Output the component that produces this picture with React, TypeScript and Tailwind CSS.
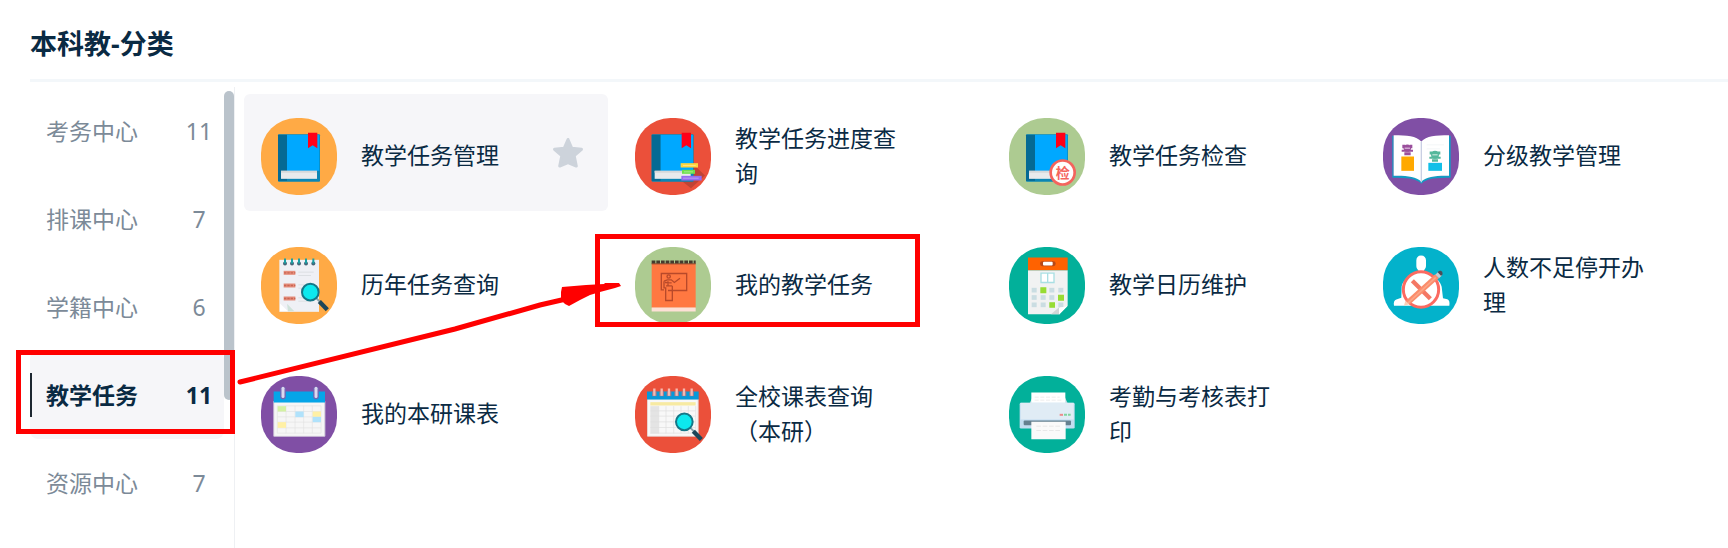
import { useState } from "react";
import type { ReactNode } from "react";
import clsx from "clsx";

const categories = [
  { name: "考务中心", count: 11 },
  { name: "排课中心", count: 7 },
  { name: "学籍中心", count: 6 },
  { name: "教学任务", count: 11 },
  { name: "资源中心", count: 7 },
];

// Round badge, flattened a little on all four sides
function Badge({ cx, cy, color, children }: { cx: number; cy: number; color: string; children: ReactNode }) {
  return (
    <svg
      className="w-[76px] h-[77px] shrink-0"
      viewBox={`${cx - 114} ${cy - 115.5} 228 231`}
      aria-hidden="true"
    >
      <rect x={cx - 114} y={cy - 115.5} width="228" height="231" rx="106" fill={color} />
      {children}
    </svg>
  );
}

function Book({ x = 0 }: { x?: number }) {
  return (
    <g transform={`translate(${x} 0)`}>
      <rect x="84" y="86" width="126" height="143" rx="3" fill="#0b86b4" />
      <rect x="84" y="88" width="27" height="138" fill="#056a94" />
      <rect x="111" y="88" width="97" height="108" fill="#00a8ff" />
      <rect x="93" y="196" width="108" height="24" fill="#e8eaec" />
      <path d="M93 196h108v6H93z" fill="#d5d8da" />
      <path d="M174 82h28v46l-14-9-14 9z" fill="#ff0018" />
    </g>
  );
}

function Lens() {
  return (
    <>
      <path d="M200 190l10 10" stroke="#8aa5ad" strokeWidth="6" />
      <path d="M208 199l24 25" stroke="#1d4659" strokeWidth="13" />
      <circle cx="181" cy="171" r="25" fill="#0ce9ee" stroke="#157787" strokeWidth="6" />
    </>
  );
}

function NotebookIcon() {
  return (
    <Badge cx={147} cy={151} color="#ffaa45">
      <rect x="88" y="74" width="119" height="156" fill="#eff0f5" />
      {[105, 126, 147, 168, 190].map((x) => (
        <g key={x}>
          <circle cx={x} cy="85" r="6" fill="#456477" />
          <path d={`M${x} 70v15`} stroke="#19a0a5" strokeWidth="6" />
        </g>
      ))}
      {[113, 151, 190].map((y) => (
        <g key={y}>
          <path d={`M101 ${y}h35`} stroke="#e58d7b" strokeWidth="12" />
          <path d={`M102 ${y}h34`} stroke="#c96552" strokeWidth="4" strokeDasharray="7 3" />
          <path d={`M145 ${y - 2}h46M145 ${y + 8}h38`} stroke="#dcdfe3" strokeWidth="3" />
        </g>
      ))}
      <path d="M90 205l24 23H90z" fill="#fff" />
      <path d="M111 206l22 22h-19z" fill="#cfe2da" />
      <Lens />
    </Badge>
  );
}

function BooksIcon() {
  return (
    <Badge cx={147} cy={153} color="#eb503a">
      <path d="M208 176l35 34-42 38-38-30z" fill="#c04434" />
      <Book x={-1} />
      <path d="M170 173h52v13h-52z" fill="#ffd640" />
      <path d="M174 193h39v12h-39z" fill="#6fe04e" />
      <path d="M172 211h61v14h-61z" fill="#966bf0" />
      <path d="M177 180h38M180 199h27M177 218h47" stroke="#fff" strokeOpacity="0.35" strokeWidth="3" />
    </Badge>
  );
}

function InspectIcon() {
  return (
    <Badge cx={141} cy={153} color="#adcb91">
      <Book x={-6} />
      <circle cx="188" cy="201" r="36" fill="#fff" stroke="#f4645d" strokeWidth="8" />
      <text
        x="188"
        y="216"
        textAnchor="middle"
        fontSize="42"
        fontWeight="700"
        fill="#f4645d"
        fontFamily="'Noto Sans CJK SC', sans-serif"
      >
        检
      </text>
    </Badge>
  );
}

function OpenBookIcon() {
  return (
    <Badge cx={148} cy={153} color="#804fa5">
      <path d="M62 91h4v119c40-1 66 2 83 14 17-12 43-15 83-14V91h5v126c-40 0-72 1-88 18-16-17-48-18-87-18z" fill="#129cc4" />
      <path d="M66 89c40 0 68 2 83 19v120c-17-14-43-18-83-17z" fill="#fff" />
      <path d="M232 89c-40 0-68 2-83 19v120c17-14 43-18 83-17z" fill="#fff" />
      <path d="M149 108v122" stroke="#c9cfe3" strokeWidth="4" />
      <path d="M165 118h52M165 130h40" stroke="#edf1f4" strokeWidth="2" />
      <g fill="#9a4f9c">
        <circle cx="107" cy="128" r="11" />
        <path d="M92 118h8v10h-8zM114 118h8v10h-8zM90 133h34v6H90zM98 140h19v9H98z" />
      </g>
      <path d="M99 128h16" stroke="#ead4eb" strokeWidth="3" />
      <rect x="89" y="153" width="38" height="43" fill="#ffa900" />
      <g fill="#55b89c">
        <circle cx="190" cy="148" r="12" />
        <path d="M174 138h8v9h-8zM198 138h8v9h-8zM173 154h34v6h-34zM181 161h18v8h-18z" />
      </g>
      <path d="M182 148h16" stroke="#d5efe7" strokeWidth="3" />
      <rect x="170" y="172" width="41" height="24" fill="#12bfe8" />
    </Badge>
  );
}

function BoardIcon() {
  return (
    <Badge cx={141} cy={151} color="#adcb91">
      <rect x="77" y="86" width="132" height="132" fill="#ff7841" />
      <path d="M77 81h132" stroke="#453b2e" strokeWidth="10" strokeDasharray="11 3" />
      <path d="M77 86h132" stroke="#8c452c" strokeWidth="3" />
      <rect x="77" y="217" width="132" height="12" fill="#fde0d6" />
      <g fill="none" stroke="#b8492a" strokeWidth="4">
        <path d="M126 166h56v-51h-76v49h8" />
        <circle cx="128" cy="124" r="5" />
        <path d="M114 138l10-4h12l9 8 17-13M114 138v20h5v38h20v-44M117 142l20 1M126 138v15M120 152h18" />
      </g>
    </Badge>
  );
}

function CalendarIcon() {
  return (
    <Badge cx={141} cy={151} color="#02b09a">
      <path d="M84 105h119v109l-24 23H84z" fill="#f1f2f2" />
      <rect x="84" y="67" width="119" height="38" fill="#ff6200" />
      <rect x="120" y="78" width="47" height="15" rx="7" fill="#b64818" />
      <rect x="129" y="80" width="29" height="11" rx="3" fill="#fff" />
      <path d="M123 114h39v28h-39zM143 114v28" fill="#fff" stroke="#a9dfe3" strokeWidth="4" />
      {[165, 187, 209].map((y) =>
        [103, 130, 156, 183].map((x) => <rect key={`${x}-${y}`} x={x - 8} y={y - 7} width="15" height="14" fill="#cadde2" />)
      )}
      <path d="M121 156h18v18h-18zM174 179h18v18h-18zM148 201h17v17h-17z" fill="#97dc32" />
      <path d="M153 237l26-22 2 22z" fill="#d2d6d6" />
      <path d="M203 213l-26 25v-20z" fill="#fff" />
      <path d="M204 212l-26 27h26z" fill="#02b09a" />
    </Badge>
  );
}

function SuspendIcon() {
  return (
    <Badge cx={148} cy={151} color="#03b2cb">
      <path
        d="M148 61c10 0 15 6 15 15v16c0 6-3 10-6 13v8l26 12c15 7 23 16 27 30l4 34 13 3c5 2 8 8 6 20H67c-2-11 1-17 7-19l15-5 1-35c4-13 11-21 27-28l23-12v-8c-4-3-6-7-6-13V76c0-9 5-15 14-15z"
        fill="#fff"
      />
      <circle cx="148" cy="163" r="53" fill="#fff" stroke="#fb6a61" strokeWidth="9" />
      <path d="M122 137l54 54" stroke="#f47764" strokeWidth="13" />
      <path d="M108 203l88-80" stroke="#fb8c6b" strokeWidth="16" />
      <path d="M106 206l86-79" stroke="#fba688" strokeWidth="5" />
      <path d="M97 212l4-15 12 10z" fill="#fbd0b7" />
      <path d="M191 119l9-9 11 11-9 8z" fill="#c6cbd0" />
      <path d="M198 111c4-6 12-6 14 0s0 9-4 11z" fill="#4c4d58" />
    </Badge>
  );
}

function TimetableIcon() {
  return (
    <Badge cx={147} cy={149} color="#804fa5">
      <rect x="70" y="108" width="156" height="108" rx="3" fill="#d9d4e0" />
      <rect x="73" y="112" width="149" height="101" fill="#f6f6f6" />
      <rect x="71" y="80" width="154" height="33" fill="#05a5e8" />
      <g fill="none" stroke="#e2e2e2" strokeWidth="2">
        <path d="M82 123h131v82H82zM82 140h131M82 156h131M82 172h131M82 189h131M108 123v82M135 123v82M161 123v82M187 123v82" />
      </g>
      <rect x="83" y="124" width="25" height="16" fill="#d3f1a4" />
      <rect x="83" y="172" width="25" height="17" fill="#fff0a5" />
      <rect x="136" y="140" width="25" height="17" fill="#b0e2fb" />
      <rect x="188" y="140" width="25" height="16" fill="#fff0a5" />
      <rect x="188" y="156" width="25" height="16" fill="#b0e2fb" />
      {[99, 198].map((x) => (
        <g key={x} strokeLinecap="round">
          <path d={`M${x} 74v21`} stroke="#7067b5" strokeWidth="17" />
          <path d={`M${x} 70v25`} stroke="#dcd9ef" strokeWidth="9" />
        </g>
      ))}
    </Badge>
  );
}

function SearchTableIcon() {
  return (
    <Badge cx={147} cy={149} color="#eb503a">
      <rect x="69" y="102" width="155" height="114" rx="3" fill="#e8d2cf" />
      <rect x="72" y="104" width="149" height="109" fill="#f8f8f8" />
      <rect x="69" y="80" width="155" height="24" fill="#0799d9" />
      {[91, 113, 135, 158, 180, 203].map((x) => (
        <g key={x}>
          <path d={`M${x} 80v14`} stroke="#9a7a91" strokeWidth="14" />
          <path d={`M${x} 71v22`} stroke="#f6b9b0" strokeWidth="7" />
        </g>
      ))}
      <rect x="79" y="112" width="136" height="10" fill="#f7eaa2" />
      <rect x="79" y="124" width="25" height="82" fill="#e4e4e4" />
      <path
        d="M79 138h136M79 154h136M79 171h136M79 188h136M79 205h136M104 124v82M126 124v82M149 124v82M171 124v82M193 124v82M215 124v82"
        stroke="#dedede"
        strokeWidth="2"
      />
      <Lens />
    </Badge>
  );
}

function PrinterIcon() {
  return (
    <Badge cx={141} cy={149} color="#02b09a">
      <path d="M89 115l8-17h98l8 17z" fill="#c3dde4" />
      <path d="M94 83h102v33H94z" fill="#fff" />
      <path d="M104 97h75M104 106h82" stroke="#ededed" strokeWidth="3" strokeDasharray="12 5" />
      <rect x="59" y="114" width="165" height="77" rx="4" fill="#c3ddf0" />
      <rect x="62" y="114" width="159" height="50" fill="#e0ecf5" />
      <rect x="71" y="167" width="142" height="14" rx="3" fill="#65808f" />
      <path d="M179 150h10" stroke="#eb8c8c" strokeWidth="6" />
      <path d="M192 150h9M204 150h8" stroke="#80d4a0" strokeWidth="6" />
      <path d="M94 171h103v52H94z" fill="#fafafa" />
      <path d="M109 184h73M109 197h73" stroke="#e8e8e8" strokeWidth="3" strokeDasharray="14 5" />
    </Badge>
  );
}

const apps = [
  {
    name: "教学任务管理",
    active: true,
    icon: (
      <Badge cx={147} cy={153} color="#ffaa45">
        <Book />
      </Badge>
    ),
  },
  { name: "教学任务进度查询", icon: <BooksIcon /> },
  { name: "教学任务检查", icon: <InspectIcon /> },
  { name: "分级教学管理", icon: <OpenBookIcon /> },
  { name: "历年任务查询", icon: <NotebookIcon /> },
  { name: "我的教学任务", icon: <BoardIcon /> },
  { name: "教学日历维护", icon: <CalendarIcon /> },
  { name: "人数不足停开办理", icon: <SuspendIcon /> },
  { name: "我的本研课表", icon: <TimetableIcon /> },
  { name: "全校课表查询（本研）", icon: <SearchTableIcon /> },
  { name: "考勤与考核表打印", icon: <PrinterIcon /> },
];

function Annotations() {
  return (
    <svg
      className="absolute top-0 left-0 w-[930px] h-[450px] pointer-events-none"
      viewBox="0 0 930 450"
      fill="none"
      stroke="#ff0000"
      aria-hidden="true"
    >
      <rect x="18.5" y="352.5" width="214" height="79" strokeWidth="5" />
      <rect x="597.5" y="236.5" width="320" height="88" strokeWidth="5" />
      <path d="M240 382L455 329L540 305L566 299" strokeWidth="5" strokeLinecap="round" />
      <path
        d="M562 287L586 285L604 284L605 283L619 283L621 286L615 288L600 292L590 295L580 300L569 306L565 304L561 300L561 292Z"
        fill="#ff0000"
        stroke="none"
      />
    </svg>
  );
}

export default function App() {
  const [current, setCurrent] = useState("教学任务");

  return (
    <div className="relative min-h-screen flex flex-col overflow-hidden bg-white text-[#0a2a43] font-['Noto_Sans','Noto_Sans_CJK_SC',sans-serif]">
      <header className="ml-[30px] pt-6 pb-[15px] border-b-3 border-[#f3f7fa]">
        <h1 className="text-[27px] leading-10 font-bold">本科教-分类</h1>
      </header>

      <div className="flex-1 flex pt-[5px]">
        <nav className="ml-[30px] w-[205px] shrink-0 flex border-r border-[#eef0f3]">
          <ul className="flex-1">
            {categories.map((c) => {
              const selected = c.name === current;
              return (
                <li key={c.name}>
                  <button
                    onClick={() => setCurrent(c.name)}
                    className={clsx(
                      "relative w-full h-[88px] pl-4 flex items-center justify-between text-[23px] rounded-lg",
                      selected ? "bg-[#f6f6f9] font-bold" : "text-[#7c8a98]"
                    )}
                  >
                    {selected && <span className="absolute left-0 top-[22px] w-0.5 h-11 bg-[#1d2731]" />}
                    <span>{c.name}</span>
                    <span className="w-[50px] text-center">{c.count}</span>
                  </button>
                </li>
              );
            })}
          </ul>
          <div className="mt-1 w-2.5 h-[309px] rounded-full bg-[#bac3cb]" />
        </nav>

        <main className="flex-1 pt-[7px] pl-[9px] -mr-0.5">
          <div className="grid grid-cols-4 gap-x-2.5 gap-y-3">
            {apps.map((app) => (
              <div
                key={app.name}
                className={clsx(
                  "group flex items-center pt-6 pb-4 pl-[17px] pr-6 rounded-md hover:bg-[#f6f6f9]",
                  app.active && "bg-[#f6f6f9]"
                )}
              >
                {app.icon}
                <a href="#" className="ml-6 mr-2 pb-0.5 flex-1 text-[23px] leading-[35px]">
                  {app.name}
                </a>
                <button
                  aria-label="收藏"
                  className={clsx("shrink-0 pb-2 text-[#cdd3db]", !app.active && "opacity-0 group-hover:opacity-100")}
                >
                  <svg className="size-8" viewBox="0 0 32 32" fill="currentColor" stroke="currentColor" strokeLinejoin="round">
                    <path
                      d="M16 2.500l3.800 8.800 9.700 1-7.300 6.400 2.100 10.300L16 25.500 7.700 29l2.100-10.300L2.500 12.300l9.700-1z"
                      strokeWidth="3"
                    />
                  </svg>
                </button>
              </div>
            ))}
          </div>
        </main>
      </div>

      <Annotations />
    </div>
  );
}
